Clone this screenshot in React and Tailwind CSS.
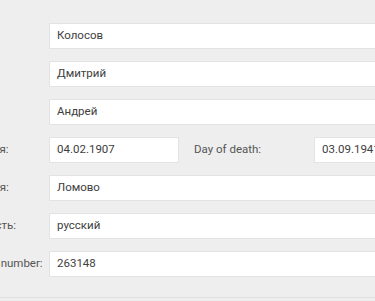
const rows = [
  { label: 'Фамилия:', value: 'Колосов' },
  { label: 'Имя:', value: 'Дмитрий' },
  { label: 'Отчество:', value: 'Андрей' },
];

const rowsBottom = [
  { label: 'Село рождения:', value: 'Ломово' },
  { label: 'Национальность:', value: 'русский' },
  { label: "Prisoner's card number:", value: '263148' },
];

function Field({ value, className = 'w-[400px]' }) {
  return (
    <div
      className={`${className} h-[26px] shrink-0 bg-white border border-[#e3e3e3] px-[7px] flex items-center text-[11.5px] text-[#404040]`}
    >
      {value}
    </div>
  );
}

export default function App() {
  return (
    <div
      className="w-[375px] h-[301px] overflow-hidden bg-[#eeeeee]"
      style={{ fontFamily: 'Roboto, "Noto Sans", sans-serif' }}
    >
      <div className="ml-[-78px] pt-[23px] pb-[20px] border-b border-[#e0e0e0] flex flex-col gap-[12px]">
        {rows.map((r) => (
          <div key={r.label} className="flex items-center">
            <div className="w-[127px] shrink-0 text-[11.5px] text-[#555]">{r.label}</div>
            <Field value={r.value} />
          </div>
        ))}

        <div className="flex items-center">
          <div className="w-[127px] shrink-0 text-[11.5px] text-[#555]">Дата рождения:</div>
          <Field value="04.02.1907" className="w-[130px]" />
          <div className="w-[135px] shrink-0 pl-[15px] text-[11.5px] text-[#555]">Day of death:</div>
          <Field value="03.09.1941" />
        </div>

        {rowsBottom.map((r) => (
          <div key={r.label} className="flex items-center">
            <div className="w-[127px] shrink-0 text-[11.5px] text-[#555] whitespace-nowrap">{r.label}</div>
            <Field value={r.value} />
          </div>
        ))}
      </div>
    </div>
  );
}
